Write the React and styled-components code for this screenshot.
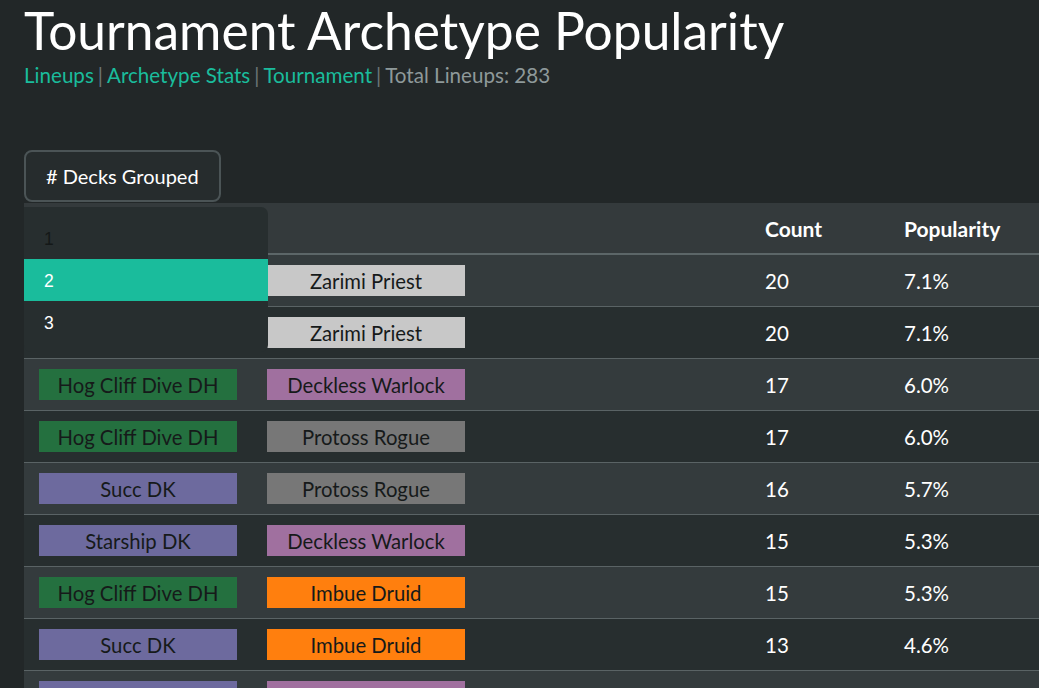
import React, { useState } from "react"
import styled, { createGlobalStyle } from "styled-components"

const GlobalStyle = createGlobalStyle`
  html, body {
    margin: 0;
    padding: 0;
    background: #222728;
    overflow: hidden;
  }
  body {
    font-family: Lato, "Noto Sans", sans-serif;
    color: #fff;
  }
`

const Page = styled.div`
  padding: 0 0 0 24px;
  width: 1100px;
`

const Title = styled.h1`
  margin: 0;
  font-size: 51.5px;
  font-weight: 400;
  line-height: 60px;
  color: #fff;
`

const SubNav = styled.div`
  font-size: 20.6px;
  line-height: 32px;
  margin-top: -1px;
  color: #8e999a;
`

const NavLink = styled.a`
  color: #1abc9c;
  text-decoration: none;
`

const Sep = styled.span`
  color: #6c7677;
  margin: 0 4px;
`

const Controls = styled.div`
  position: relative;
  margin-top: 59px;
  height: 53px;
`

const GroupButton = styled.button`
  height: 52px;
  padding: 0 20px;
  background: #262c2d;
  border: 2px solid #4b5456;
  border-radius: 8px;
  color: #fff;
  font-family: Lato, sans-serif;
  font-size: 20px;
  cursor: pointer;
`

const Menu = styled.ul`
  position: absolute;
  z-index: 2;
  left: 0;
  top: 57px;
  width: 244px;
  margin: 0;
  padding: 10px 0 9px;
  list-style: none;
  background: #272e2f;
  border-radius: 0 7px 7px 7px;
`

const MenuItem = styled.li`
  height: 42px;
  box-sizing: border-box;
  display: flex;
  align-items: center;
  padding: 3px 0 0 20px;
  font-family: "Liberation Sans", Arial, sans-serif;
  font-size: 17.5px;
  color: ${p => (p.muted ? "#141818" : "#fff")};
  background: ${p => (p.active ? "#1abc9c" : "transparent")};
  cursor: pointer;
`

const Table = styled.div`
  display: grid;
  grid-template-columns: 228px 498px 139px 1fr;
`

const HeadCell = styled.div`
  height: 50px;
  display: flex;
  align-items: center;
  padding: 0 15px;
  background: #343a3c;
  border-bottom: 2px solid #5c6668;
  font-size: 21px;
  font-weight: 700;
`

const Cell = styled.div`
  height: 51px;
  display: flex;
  align-items: center;
  padding: 0 15px;
  background: ${p => (p.odd ? "#343b3d" : "#272e2f")};
  border-bottom: 1px solid #5a6365;
  font-size: 20.5px;
`

const Badge = styled.span`
  width: 198px;
  height: 31px;
  display: flex;
  align-items: center;
  justify-content: center;
  background: ${p => p.color};
  color: #161a1a;
  font-size: 20.3px;
`

const COLORS = {
  "Zarimi Priest": "#c8c8c8",
  "Hog Cliff Dive DH": "#24703f",
  "Deckless Warlock": "#a0709f",
  "Protoss Rogue": "#777777",
  "Succ DK": "#6d6a9e",
  "Starship DK": "#6d6a9e",
  "Imbue Druid": "#ff7f0e",
}

const rows = [
  [null, "Zarimi Priest", 20, "7.1%"],
  [null, "Zarimi Priest", 20, "7.1%"],
  ["Hog Cliff Dive DH", "Deckless Warlock", 17, "6.0%"],
  ["Hog Cliff Dive DH", "Protoss Rogue", 17, "6.0%"],
  ["Succ DK", "Protoss Rogue", 16, "5.7%"],
  ["Starship DK", "Deckless Warlock", 15, "5.3%"],
  ["Hog Cliff Dive DH", "Imbue Druid", 15, "5.3%"],
  ["Succ DK", "Imbue Druid", 13, "4.6%"],
  ["Succ DK", "Deckless Warlock", 12, "4.2%"],
]

const DeckBadge = ({ name }) =>
  name ? <Badge color={COLORS[name]}>{name}</Badge> : null

export default function App() {
  const [grouped, setGrouped] = useState(2)
  const [open, setOpen] = useState(true)

  return (
    <Page>
      <GlobalStyle />
      <Title>Tournament Archetype Popularity</Title>
      <SubNav>
        <NavLink href="#">Lineups</NavLink>
        <Sep>|</Sep>
        <NavLink href="#">Archetype Stats</NavLink>
        <Sep>|</Sep>
        <NavLink href="#">Tournament</NavLink>
        <Sep>|</Sep>
        Total Lineups: 283
      </SubNav>

      <Controls>
        <GroupButton onClick={() => setOpen(!open)}># Decks Grouped</GroupButton>
        {open && (
          <Menu>
            {[1, 2, 3].map(n => (
              <MenuItem
                key={n}
                active={n === grouped}
                muted={n === 1}
                onClick={() => setGrouped(n)}
              >
                {n}
              </MenuItem>
            ))}
          </Menu>
        )}
      </Controls>

      <Table>
        <HeadCell />
        <HeadCell />
        <HeadCell>Count</HeadCell>
        <HeadCell>Popularity</HeadCell>
        {rows.map((r, i) => (
          <React.Fragment key={i}>
            <Cell odd={i % 2 === 0}>
              <DeckBadge name={r[0]} />
            </Cell>
            <Cell odd={i % 2 === 0}>
              <DeckBadge name={r[1]} />
            </Cell>
            <Cell odd={i % 2 === 0}>{r[2]}</Cell>
            <Cell odd={i % 2 === 0}>{r[3]}</Cell>
          </React.Fragment>
        ))}
      </Table>
    </Page>
  )
}
